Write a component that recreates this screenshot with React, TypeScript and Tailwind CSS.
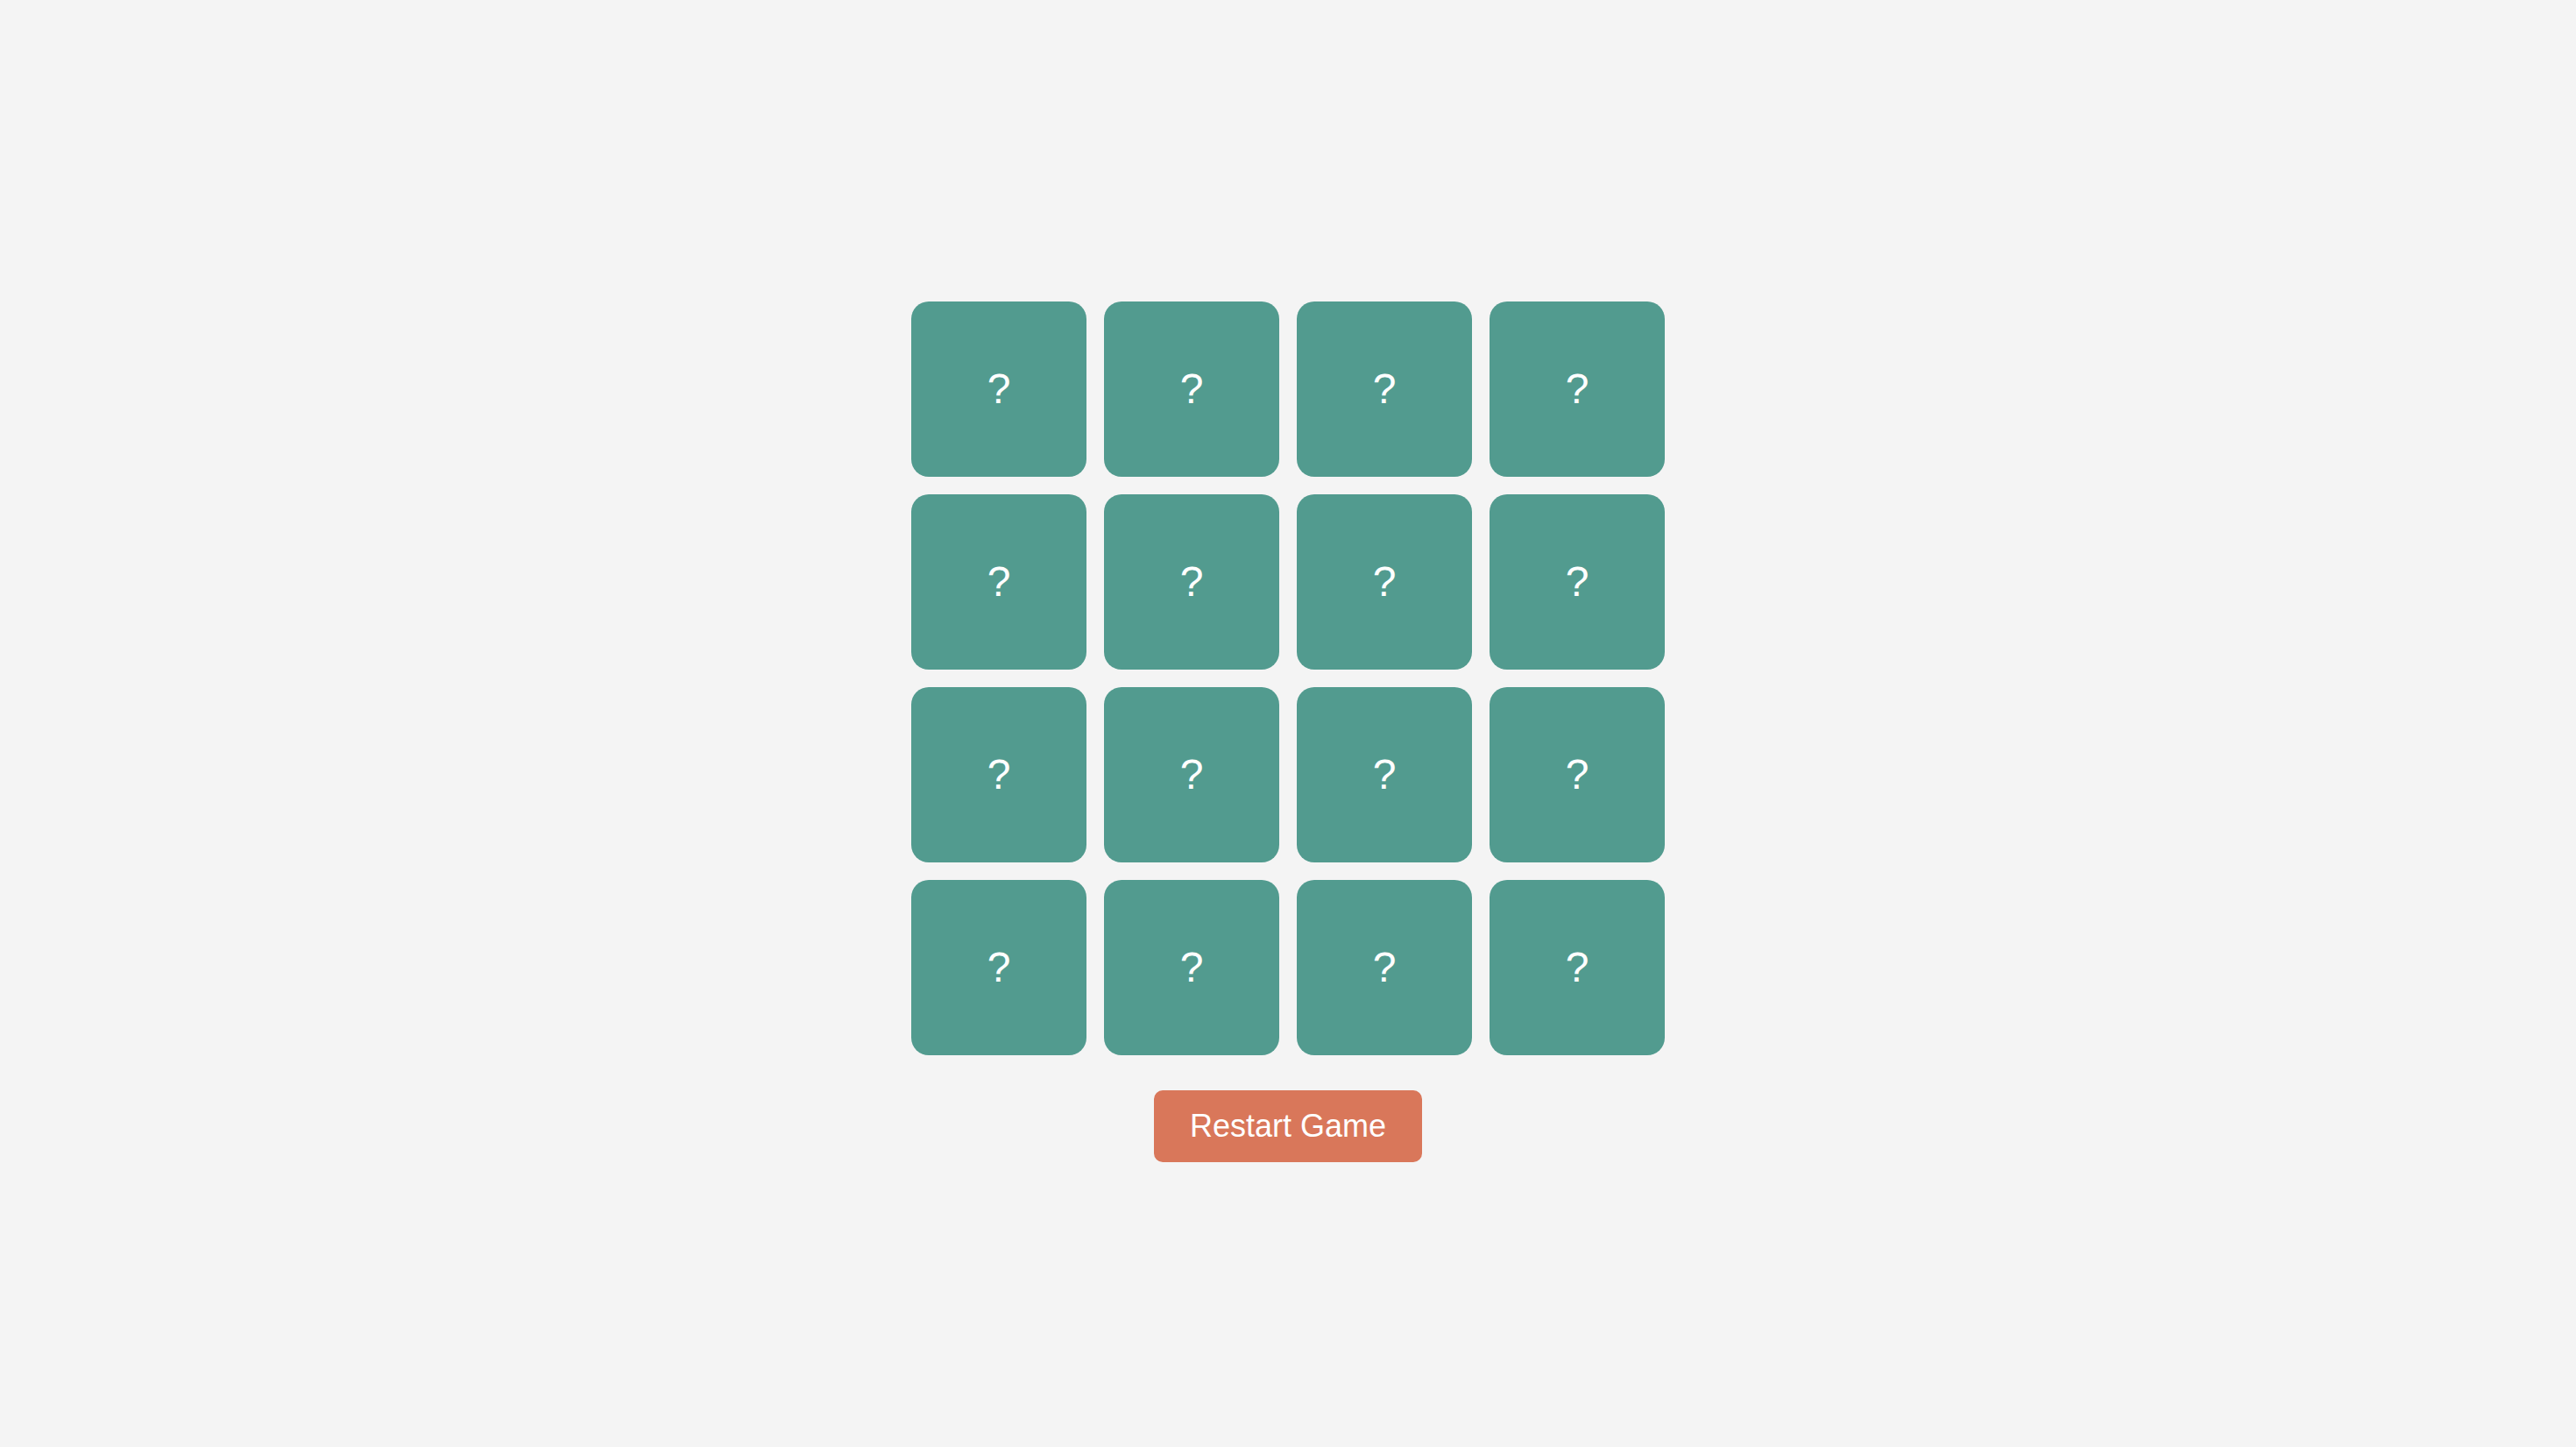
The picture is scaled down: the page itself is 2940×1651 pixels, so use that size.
const cards = Array.from({ length: 16 }, (_, i) => i);

export default function App() {
  return (
    <div className="min-h-screen bg-[#f4f4f4] flex flex-col items-center pt-[344px] font-['Liberation_Sans',Arial,sans-serif]">
      <div className="grid grid-cols-4 gap-[20px]">
        {cards.map((i) => (
          <div
            key={i}
            className="w-[200px] h-[200px] rounded-[20px] bg-[#529b8f] flex items-center justify-center text-white text-[48px] leading-none select-none"
          >
            ?
          </div>
        ))}
      </div>
      <button className="mt-[40px] h-[82px] px-[41px] rounded-[10px] bg-[#d9775a] text-white text-[36px] leading-none">
        Restart Game
      </button>
    </div>
  );
}
